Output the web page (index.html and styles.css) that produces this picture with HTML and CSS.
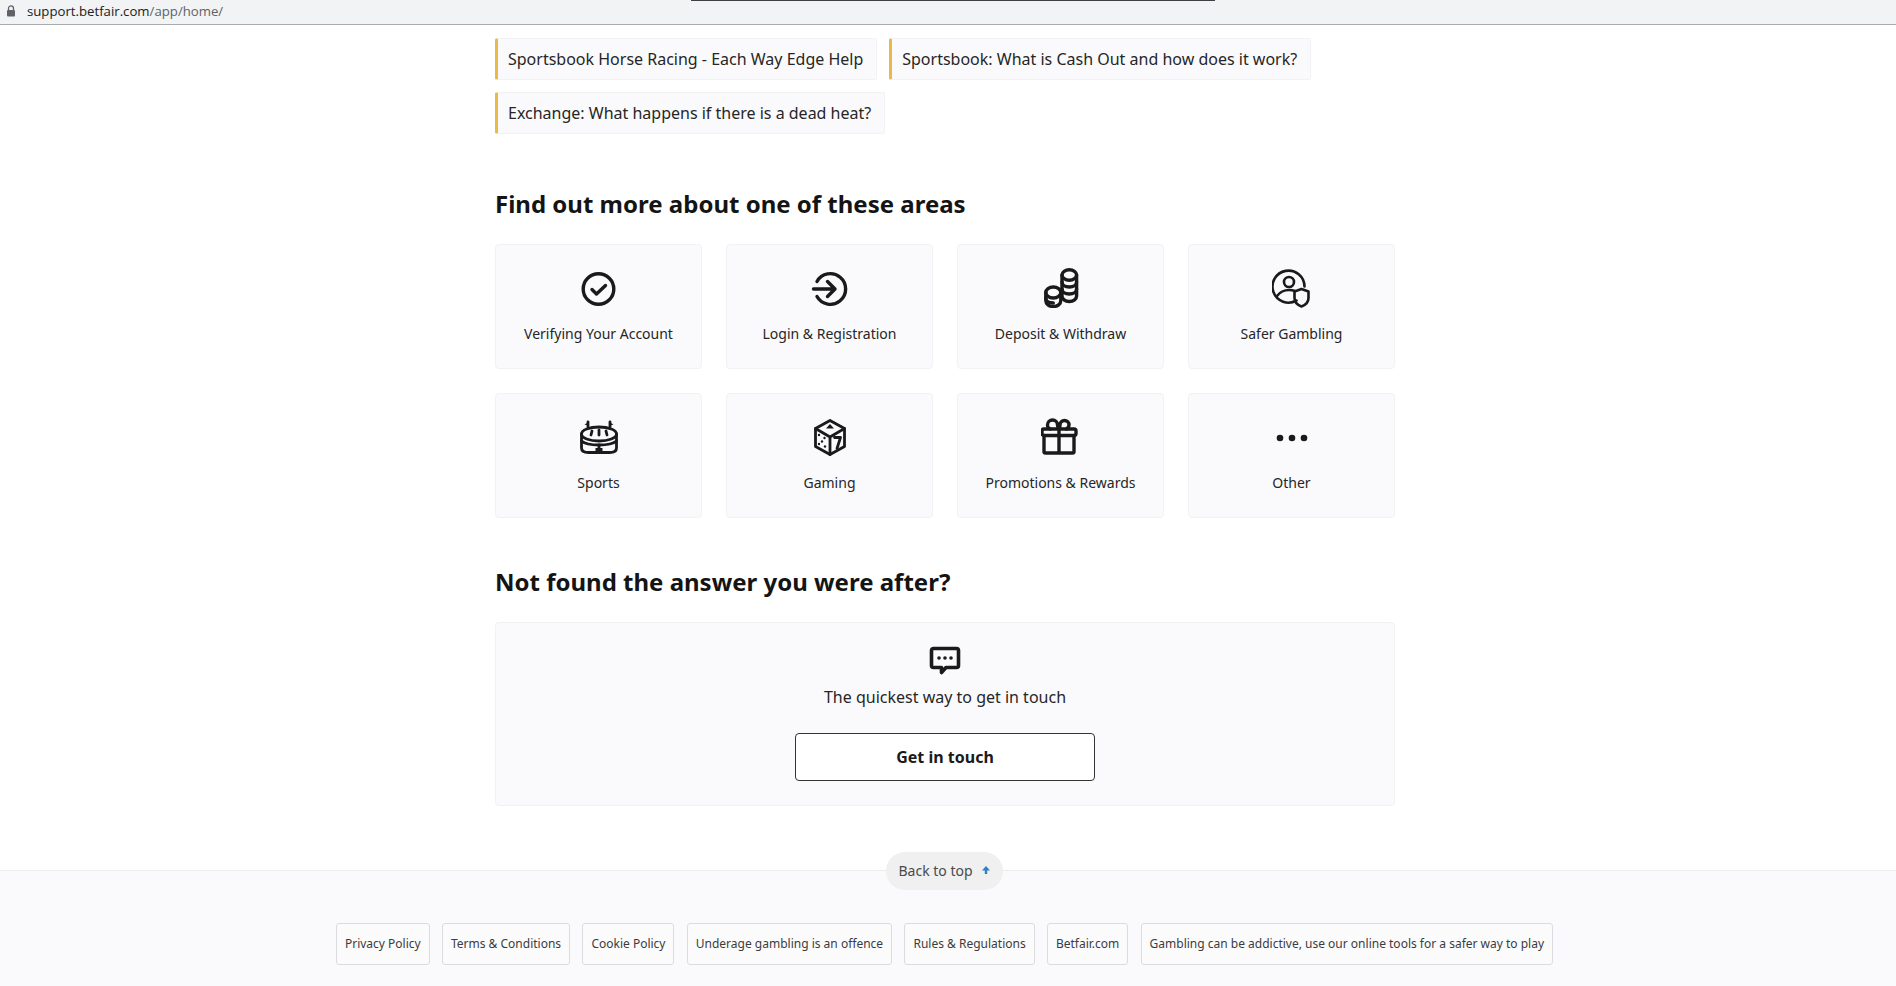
FILE: index.html
```html
<!DOCTYPE html>
<html lang="en">

<head>
    <meta charset="UTF-8">
    <meta name="viewport" content="width=device-width, initial-scale=1.0">
    <title>Betfair Support</title>
    <link rel="stylesheet" href="styles.css">
</head>

<body>

    <div class="addressBar">
        <svg class="lockIcon" width="10" height="12" viewBox="0 0 10 12">
            <path d="M2.5 5V3.4a2.5 2.5 0 0 1 5 0V5" fill="none" stroke="#5f6368" stroke-width="1.3" />
            <rect x="1" y="5" width="8" height="6.5" rx="1" fill="#5f6368" />
        </svg>
        <span class="url">support.betfair.com<span class="urlPath">/app/home/</span></span>
        <div class="tabLine"></div>
    </div>

    <div class="content">
        <div class="chipList">
            <a class="chip">Sportsbook Horse Racing - Each Way Edge Help</a>
            <a class="chip">Sportsbook: What is Cash Out and how does it work?</a>
            <a class="chip">Exchange: What happens if there is a dead heat?</a>
        </div>

        <h2 class="areasTitle">Find out more about one of these areas</h2>

        <div class="areaGrid">
            <a class="areaCard">
                <svg class="areaIcon" viewBox="0 0 40 40">
                    <circle cx="19.500" cy="21" r="15.300" />
                    <path d="M13 21.500l4.500 4.500 9-8.500" />
                </svg>
                <span>Verifying Your Account</span>
            </a>
            <a class="areaCard">
                <svg class="areaIcon" viewBox="0 0 40 40">
                    <path d="M7 13.500a15.300 15.300 0 1 1 0 15" />
                    <path d="M3.500 21h21M17.500 13.500l7.500 7.500-7.500 7.500" />
                </svg>
                <span>Login &amp; Registration</span>
            </a>
            <a class="areaCard">
                <svg class="areaIcon coins" viewBox="0 0 40 40">
                    <ellipse cx="28.300" cy="7" rx="7.300" ry="5.300" />
                    <path d="M21 7v21c0 3 3 5.500 7.300 5.500s7.300-2.500 7.300-5.500V7" />
                    <path d="M21 14c0 3 3 5 7.300 5s7.300-2 7.300-5M21 21c0 3 3 5 7.300 5s7.300-2 7.300-5" />
                    <ellipse cx="12.300" cy="24.500" rx="7.500" ry="5.500" />
                    <path d="M4.800 24.500v8c0 3.500 3.300 6 7.500 6s7.500-2.500 7.500-6v-8" />
                    <path d="M4.800 30c0 3 3.300 5 7.500 5" />
                </svg>
                <span>Deposit &amp; Withdraw</span>
            </a>
            <a class="areaCard">
                <svg class="areaIcon thin" viewBox="0 0 40 40">
                    <path d="M24.500 32.500a16 16 0 1 1 8-14" />
                    <circle cx="17" cy="14" r="5" />
                    <path d="M5 28c3-4 7-6 12-6 2 0 4 .3 6 1" />
                    <path d="M29.500 21l7 2.500v6.500c0 4-3 7-7 8.500-4-1.500-7-4.500-7-8.500v-6.500z" />
                </svg>
                <span>Safer Gambling</span>
            </a>
            <a class="areaCard">
                <svg class="areaIcon stadium" viewBox="0 0 40 40">
                    <ellipse cx="20" cy="17" rx="17.500" ry="7" />
                    <path d="M2.500 17v14c0 3 3 4.500 7 4.500h21c4 0 7-1.500 7-4.500v-14" />
                    <path d="M2.500 24c4 3.500 10 4 17.500 4s13.500-.5 17.500-4" />
                    <path d="M9 10V5M31 10V5M20 13v5M13 14l-1 4M27 14l1 4M20 28v3" />
                    <path d="M9 5.500L5.500 7.500 9 8.500zM31 5.500l3.500 2-3.500 1z" class="filled" />
                    <rect x="16.500" y="31" width="7" height="4.500" class="filled" />
                </svg>
                <span>Sports</span>
            </a>
            <a class="areaCard">
                <svg class="areaIcon dice" viewBox="0 0 40 40">
                    <path d="M20 3.500L34.500 11.500V29.500L20 37.500 5.500 29.500V11.500z" />
                    <path d="M5.500 11.500L20 20 34.500 11.500M20 20V37.500" />
                    <path d="M20 7l4 4.500h-8zM20 9.500v5" class="filled" />
                    <path d="M24.500 20.500h6l-3.500 11" />
                    <g class="filled">
                        <circle cx="9" cy="18" r="1.200" />
                        <circle cx="14.500" cy="21" r="1.200" />
                        <circle cx="12" cy="24.500" r="1.200" />
                        <circle cx="9" cy="27" r="1.200" />
                        <circle cx="15" cy="29.500" r="1.200" />
                    </g>
                </svg>
                <span>Gaming</span>
            </a>
            <a class="areaCard">
                <svg class="areaIcon" viewBox="0 0 40 40">
                    <rect x="1" y="12" width="34" height="6.500" rx="2" />
                    <path d="M3 18.500V34.500a1.500 1.500 0 0 0 1.500 1.500h27a1.500 1.500 0 0 0 1.500-1.500V18.500M18 12V36" />
                    <path d="M18 12c-1-1-1.500-2-1.500-4a5 5 0 0 0-10 0c0 2 1.500 4 3 4M18 12c1-1 1-2.500 1-4a4.500 4.500 0 0 1 9 0c0 2-1 3-2.500 4" />
                </svg>
                <span>Promotions &amp; Rewards</span>
            </a>
            <a class="areaCard">
                <svg class="areaIcon" viewBox="0 0 40 40">
                    <g class="filled">
                        <circle cx="8" cy="21" r="3.300" />
                        <circle cx="20" cy="21" r="3.300" />
                        <circle cx="32" cy="21" r="3.300" />
                    </g>
                </svg>
                <span>Other</span>
            </a>
        </div>

        <h2 class="notFoundTitle">Not found the answer you were after?</h2>

        <div class="contactBox">
            <svg class="chatIcon" viewBox="0 0 32 32">
                <path d="M4.500 4.500h23a2 2 0 0 1 2 2v15a2 2 0 0 1-2 2H17l-4.500 5v-5H4.500a2 2 0 0 1-2-2v-15a2 2 0 0 1 2-2z" />
                <g class="filled">
                    <circle cx="10" cy="14" r="1.800" />
                    <circle cx="16" cy="14" r="1.800" />
                    <circle cx="22" cy="14" r="1.800" />
                </g>
            </svg>
            <p class="contactText">The quickest way to get in touch</p>
            <a class="contactButton">Get in touch</a>
        </div>
    </div>

    <div class="footerpage">
        <a class="backToTop">Back to top
            <svg width="10" height="10" viewBox="0 0 10 10">
                <path d="M5 1L9 5.500H6.200V9H3.800V5.500H1z" fill="#2f7fc4" />
            </svg>
        </a>
        <div class="footerLinks">
            <a class="footerLink">Privacy Policy</a>
            <a class="footerLink">Terms &amp; Conditions</a>
            <a class="footerLink">Cookie Policy</a>
            <a class="footerLink">Underage gambling is an offence</a>
            <a class="footerLink">Rules &amp; Regulations</a>
            <a class="footerLink">Betfair.com</a>
            <a class="footerLink">Gambling can be addictive, use our online tools for a safer way to play</a>
        </div>
    </div>

</body>

</html>
```

FILE: styles.css
```css
html,
body {
    margin: 0;
    height: 986px;
    overflow: hidden;
}

body {
    display: flex;
    flex-direction: column;
    background-color: #fff;
    color: #262626;
    font-family: "Noto Sans", "Open Sans", sans-serif;
}

.addressBar {
    position: relative;
    display: flex;
    align-items: center;
    box-sizing: border-box;
    height: 25px;
    padding-left: 6px;
    padding-bottom: 2px;
    background-color: #f1f3f4;
    border-bottom: 1px solid #a9abad;
}

.lockIcon {
    margin-right: 11px;
}

.url {
    font-family: "Open Sans", sans-serif;
    font-size: 13.2px;
    color: #202124;
}

.urlPath {
    color: #5f6368;
}

.tabLine {
    position: absolute;
    top: 0;
    left: 691px;
    width: 524px;
    height: 1px;
    background-color: #3c3f43;
}

/* page column sits a little left of centre in the shot */
.content {
    width: 900px;
    margin-left: 495px;
}

.chipList {
    display: flex;
    flex-wrap: wrap;
    gap: 12px;
    padding-top: 13px;
}

.chip {
    display: flex;
    align-items: center;
    height: 40px;
    padding: 0 13px 0 10px;
    background-color: #fafafc;
    border: 1px solid #f2f2f4;
    border-left: 3px solid #e9b949;
    border-radius: 2px;
    font-size: 16px;
}

.areasTitle,
.notFoundTitle {
    margin: 0;
    font-size: 24px;
    font-weight: 700;
    line-height: 32px;
    color: #141414;
}

.areasTitle {
    margin-top: 54px;
    margin-bottom: 24px;
}

.notFoundTitle {
    margin-top: 48px;
    margin-bottom: 24px;
}

.areaGrid {
    display: grid;
    grid-template-columns: repeat(4, 1fr);
    gap: 24px;
}

.areaCard {
    display: flex;
    flex-direction: column;
    align-items: center;
    box-sizing: border-box;
    height: 125px;
    padding-top: 23px;
    background-color: #fafafc;
    border: 1px solid #f2f2f4;
    border-radius: 4px;
    font-size: 14px;
    line-height: 22px;
}

.areaIcon {
    width: 40px;
    height: 40px;
    margin-bottom: 15px;
    flex: none;
    fill: none;
    stroke: #1a1a1a;
    stroke-width: 3.4;
    stroke-linecap: round;
    stroke-linejoin: round;
}

.areaIcon.thin {
    stroke-width: 2.600;
}

.areaIcon.stadium,
.areaIcon.dice {
    stroke-width: 2.800;
}

.filled {
    fill: #1a1a1a;
    stroke: none;
}

.contactBox {
    display: flex;
    flex-direction: column;
    align-items: center;
    box-sizing: border-box;
    height: 184px;
    padding-top: 21px;
    background-color: #fafafc;
    border: 1px solid #f2f2f4;
    border-radius: 4px;
}

.chatIcon {
    width: 32px;
    height: 32px;
    fill: none;
    stroke: #1a1a1a;
    stroke-width: 3.6;
    stroke-linejoin: round;
}

.contactText {
    margin: 9px 0 0;
    font-size: 16px;
    line-height: 24px;
}

.contactButton {
    display: flex;
    align-items: center;
    justify-content: center;
    box-sizing: border-box;
    width: 300px;
    height: 48px;
    margin-top: 24px;
    background-color: #fff;
    border: 1px solid #333;
    border-radius: 4px;
    font-size: 16px;
    font-weight: 700;
    color: #1a1a1a;
}

.footerpage {
    display: flex;
    flex-direction: column;
    align-items: center;
    flex: 1;
    margin-top: 64px;
    padding-right: 7px;
    background-color: #fafafc;
    border-top: 1px solid #ececee;
}

.backToTop {
    display: flex;
    align-items: center;
    gap: 8px;
    box-sizing: border-box;
    height: 38px;
    margin-top: -19px;
    padding: 0 12px 2px;
    background-color: #f0f0f1;
    border-radius: 19px;
    font-size: 14px;
    color: #4a4a4a;
}

.footerLinks {
    display: flex;
    gap: 12.300px;
    margin-top: 33px;
}

.footerLink {
    display: flex;
    align-items: center;
    height: 42px;
    box-sizing: border-box;
    padding: 0 8px 1px;
    background-color: #fbfbfc;
    border: 1px solid #dcdce0;
    border-radius: 3px;
    font-size: 12px;
    color: #3c3c3c;
}
```
